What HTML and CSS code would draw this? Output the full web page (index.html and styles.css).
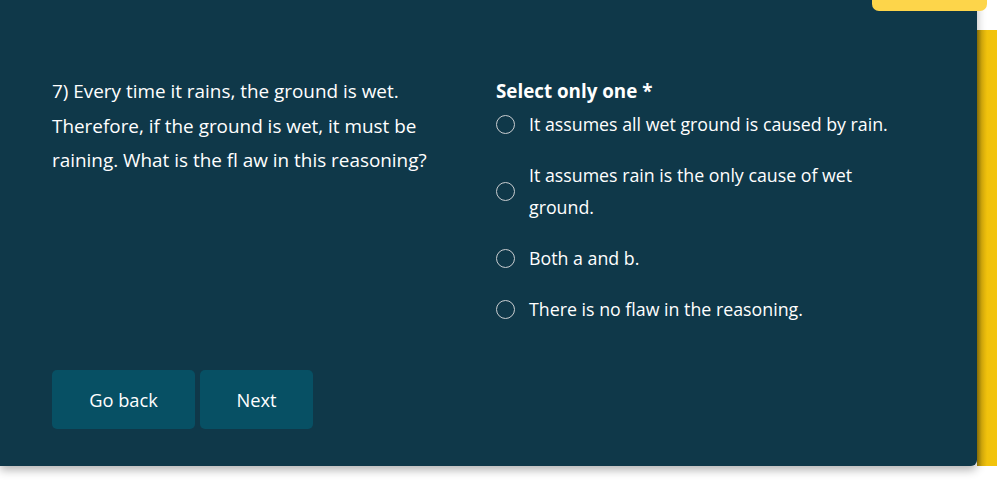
FILE: index.html
```html
<!DOCTYPE html>
<html>
<head>
<meta charset="utf-8">
<link rel="stylesheet" href="styles.css">
</head>
<body>
<div class="stage">
  <div class="card">
    <div class="grid">
      <p class="question">7) Every time it rains, the ground is wet. Therefore, if the ground is wet, it must be raining. What is the fl aw in this reasoning?</p>
      <div class="answers">
        <div class="label">Select only one *</div>
        <label class="option"><span class="radio"></span><span class="otext">It assumes all wet ground is caused by rain.</span></label>
        <label class="option"><span class="radio"></span><span class="otext">It assumes rain is the only cause of wet ground.</span></label>
        <label class="option"><span class="radio"></span><span class="otext">Both a and b.</span></label>
        <label class="option"><span class="radio"></span><span class="otext">There is no flaw in the reasoning.</span></label>
      </div>
    </div>
    <div class="buttons">
      <button class="btn back">Go back</button>
      <button class="btn next">Next</button>
    </div>
  </div>
  <div class="strip"></div>
  <div class="tab"></div>
</div>
</body>
</html>
```
FILE: styles.css
```css
html, body {
  margin: 0;
  padding: 0;
  background: #ffffff;
}
body {
  font-family: "Open Sans", "Noto Sans", sans-serif;
  color: #ffffff;
  width: 997px;
  height: 497px;
  overflow: hidden;
}
.stage {
  position: relative;
  display: flex;
  align-items: flex-start;
}
.card {
  width: 977px;
  height: 466px;
  box-sizing: border-box;
  background: #0f3849;
  border-bottom-right-radius: 6px;
  box-shadow: 0 4px 10px rgba(0, 0, 0, 0.3);
  padding: 74px 0 0 52px;
  position: relative;
  z-index: 1;
}
.strip {
  width: 20px;
  height: 436px;
  margin-top: 30px;
  background: linear-gradient(to right, #9c800a 0px, #d9ae0c 5px, #f1c20d 10px, #f2c40d 20px);
}
.tab {
  position: absolute;
  left: 872px;
  top: 0;
  width: 115px;
  height: 11px;
  background: #fdd54a;
  border-radius: 0 0 7px 7px;
  z-index: 2;
}
.grid {
  display: grid;
  grid-template-columns: 444px 420px;
}
.question {
  margin: 0;
  font-size: 18.9px;
  line-height: 34.5px;
  width: 392px;
}
.answers {
  display: flex;
  flex-direction: column;
}
.label {
  font-weight: 700;
  font-size: 18.8px;
  line-height: 34px;
}
.option {
  display: flex;
  align-items: center;
  gap: 14px;
  margin-bottom: 19px;
  font-size: 17.8px;
  line-height: 32px;
}
.otext {
  width: 360px;
}
.radio {
  flex: none;
  width: 17px;
  height: 17px;
  border: 1.5px solid #c9cdd0;
  border-radius: 50%;
}
.buttons {
  display: flex;
  gap: 5px;
  margin-top: 26px;
}
.btn {
  font-family: inherit;
  font-size: 18.3px;
  color: #ffffff;
  background: #075064;
  border: none;
  border-radius: 5px;
  height: 59px;
  padding: 0;
}
.back { width: 143px; }
.next { width: 113px; }
```
